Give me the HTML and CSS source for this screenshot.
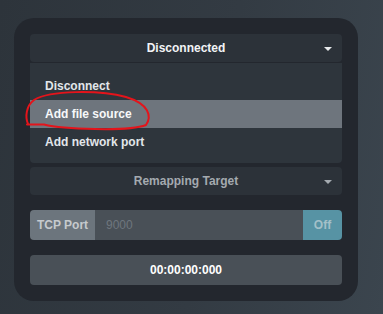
FILE: index.html
```html
<!DOCTYPE html>
<html lang="en">
<head>
    <meta charset="UTF-8">
    <meta name="viewport" content="width=device-width, initial-scale=1.0">
    <title>Source Panel</title>
    <link rel="stylesheet" href="styles.css">
</head>
<body>
    <div class="panel">
        <div class="select select-main">
            <span class="select-label">Disconnected</span>
            <span class="caret"></span>
        </div>
        <ul class="menu">
            <li class="menu-item">Disconnect</li>
            <li class="menu-item active">Add file source</li>
            <li class="menu-item">Add network port</li>
        </ul>
        <div class="select select-muted">
            <span class="select-label">Remapping Target</span>
            <span class="caret"></span>
        </div>
        <div class="input-group">
            <span class="addon">TCP Port</span>
            <input class="port-input" type="text" placeholder="9000">
            <button class="toggle">Off</button>
        </div>
        <div class="timecode">00:00:00:000</div>

        <!-- red marker drawn on the screenshot -->
        <svg class="marker" width="383" height="314" viewBox="0 0 383 314">
            <path d="M27 124.5 L44 124.5 C62 129 128 132 146 125 C152 116 149 104 126 97 C100 90 50 90 34 100 C26 106 25 117 28 124"
                  fill="none" stroke="#e4141b" stroke-width="2" stroke-linecap="round"/>
        </svg>
    </div>
</body>
</html>
```

FILE: styles.css
```css
body {
    margin: 0;
    padding: 18px 0 0 14px;
    height: 314px;
    box-sizing: border-box;
    background: linear-gradient(100deg, #2d343b 0%, #333b43 55%, #3b454e 100%);
    font-family: "Liberation Sans", Arial, sans-serif;
    font-size: 12px;
    font-weight: bold;
    overflow: hidden;
}
.panel {
    width: 344px;
    height: 283px;
    box-sizing: border-box;
    padding: 16px;
    background: #23272e;
    border-radius: 20px;
    display: flex;
    flex-direction: column;
}
.select {
    height: 28px;
    background: #2c3239;
    border-radius: 4px;
    display: flex;
    align-items: center;
    justify-content: center;
    position: relative;
}
.select-main {
    color: #f2f4f6;
}
.select-muted {
    margin-top: 4px;
    color: #a4aab0;
}
.caret {
    position: absolute;
    right: 10px;
    top: 13px;
    width: 0;
    height: 0;
    border-left: 4px solid transparent;
    border-right: 4px solid transparent;
    border-top: 4px solid #e8eaec;
}
.select-muted .caret {
    border-top-color: #a4aab0;
}
.menu {
    list-style: none;
    margin: 1px 0 0;
    padding: 9px 0 7px;
    background: #2e353c;
    border-radius: 0 0 4px 4px;
}
.menu-item {
    height: 28px;
    line-height: 28px;
    padding-left: 15px;
    color: #e2e6ea;
}
.menu-item.active {
    background: #6e757d;
    color: #f8f9fa;
}
.input-group {
    margin-top: 15px;
    height: 30px;
    display: flex;
}
.addon {
    width: 65px;
    background: #6c757d;
    color: #c6cacd;
    border-radius: 4px 0 0 4px;
    display: flex;
    align-items: center;
    justify-content: center;
}
.port-input {
    flex: 1;
    min-width: 0;
    border: none;
    margin: 0;
    padding: 0 11px;
    background: #495057;
    font-family: inherit;
    font-size: 12px;
    color: #ced4da;
    outline: none;
}
.port-input::placeholder {
    color: #6e767e;
}
.toggle {
    width: 39px;
    border: none;
    margin: 0;
    padding: 0;
    background: #5793a4;
    color: #a4c0c8;
    font-family: inherit;
    font-size: 12px;
    font-weight: bold;
    border-radius: 0 4px 4px 0;
}
.timecode {
    margin-top: 15px;
    height: 30px;
    background: #495057;
    border-radius: 4px;
    color: #ffffff;
    display: flex;
    align-items: center;
    justify-content: center;
}
.marker {
    position: absolute;
    left: 0;
    top: 0;
    pointer-events: none;
}
```
